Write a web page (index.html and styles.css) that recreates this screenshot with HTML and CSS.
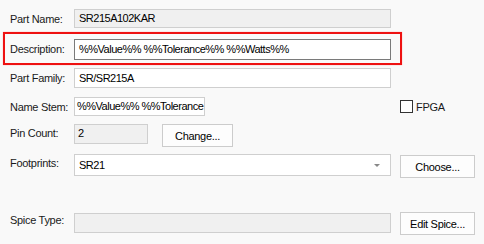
FILE: index.html
```html
<!DOCTYPE html>
<html lang="en">
<head>
  <meta charset="UTF-8" />
  <title>Part Properties</title>
  <link rel="stylesheet" href="styles.css">
</head>
<body>
  <div class="form">
    <div class="row row-name">
      <span class="label">Part Name:</span>
      <div class="field readonly">SR215A102KAR</div>
    </div>

    <div class="row row-desc">
      <span class="label">Description:</span>
      <div class="field focused">%%Value%% %%Tolerance%% %%Watts%%</div>
    </div>

    <div class="row row-family">
      <span class="label">Part Family:</span>
      <div class="field">SR/SR215A</div>
    </div>

    <div class="row row-stem">
      <span class="label">Name Stem:</span>
      <div class="field short">%%Value%% %%Tolerance</div>
      <label class="check"><span class="box"></span>FPGA</label>
    </div>

    <div class="row row-pins">
      <span class="label">Pin Count:</span>
      <div class="field readonly pins">2</div>
      <button class="button change">Change...</button>
    </div>

    <div class="row row-foot">
      <span class="label">Footprints:</span>
      <div class="field combo">SR21<span class="arrow"></span></div>
      <button class="button side">Choose...</button>
    </div>

    <div class="row row-spice">
      <span class="label">Spice Type:</span>
      <div class="field readonly"></div>
      <button class="button side">Edit Spice...</button>
    </div>
  </div>
</body>
</html>
```

FILE: styles.css
```css
body {
  margin: 0;
  font-family: "Segoe UI", "Liberation Sans", Arial, sans-serif;
  font-size: 11px;
  letter-spacing: -0.3px;
  background: #f9f9f9;
  color: #000;
}
.form {
  display: flex;
  flex-direction: column;
  padding-top: 9px;
}
.row {
  display: flex;
  align-items: center;
  padding-left: 10px;
}
.label {
  width: 64px;
  flex: none;
  white-space: nowrap;
  color: #1a1a1a;
}
.field {
  box-sizing: border-box;
  width: 317px;
  height: 19px;
  border: 1px solid #cfcfcf;
  background: #fff;
  padding: 0 0 0 4px;
  line-height: 17px;
  letter-spacing: -0.5px;
  white-space: nowrap;
  overflow: hidden;
}
.readonly {
  background: #f0f0f0;
}
.row-desc {
  margin: 4px 0 0 3px;
  padding-left: 5px;
  width: 390px;
  height: 29px;
  border: 2px solid #ee1111;
  box-shadow: 0 0 1px #ff9090;
}
.focused {
  height: 21px;
  line-height: 19px;
  border-color: #7a7a7a;
  margin-top: 1px;
}
.row-family {
  margin-top: 3px;
}
.row-family .field {
  height: 20px;
  line-height: 18px;
}
.row-stem {
  margin-top: 9px;
}
.short {
  width: 131px;
  padding-left: 2px;
}
.check {
  display: flex;
  align-items: center;
  margin-left: 195px;
  color: #1a1a1a;
}
.box {
  width: 11px;
  height: 11px;
  border: 1px solid #333;
  background: #fff;
  margin-right: 3px;
}
.row-pins {
  margin-top: 8px;
  align-items: flex-start;
}
.row-pins .label {
  margin-top: 3px;
}
.pins {
  width: 74px;
  height: 20px;
  padding-left: 3px;
}
.button {
  box-sizing: border-box;
  height: 23px;
  border: 1px solid #cccccc;
  background: #fdfdfd;
  font: inherit;
  letter-spacing: inherit;
  color: #000;
  padding: 0;
}
.change {
  width: 71px;
  margin-left: 14px;
}
.row-foot {
  margin-top: 7px;
  align-items: flex-start;
}
.row-foot .label {
  margin-top: 3px;
}
.combo {
  position: relative;
  height: 22px;
  line-height: 20px;
}
.arrow {
  position: absolute;
  right: 10px;
  top: 9px;
  border-left: 3px solid transparent;
  border-right: 3px solid transparent;
  border-top: 3px solid #888;
}
.side {
  width: 75px;
  margin: 1px 0 0 9px;
}
.row-spice {
  margin-top: 34px;
  align-items: flex-start;
}
.row-spice .label {
  margin-top: 2px;
}
.row-spice .field {
  margin-top: 1px;
  height: 20px;
}
.row-spice .side {
  margin-top: 0;
}
```
